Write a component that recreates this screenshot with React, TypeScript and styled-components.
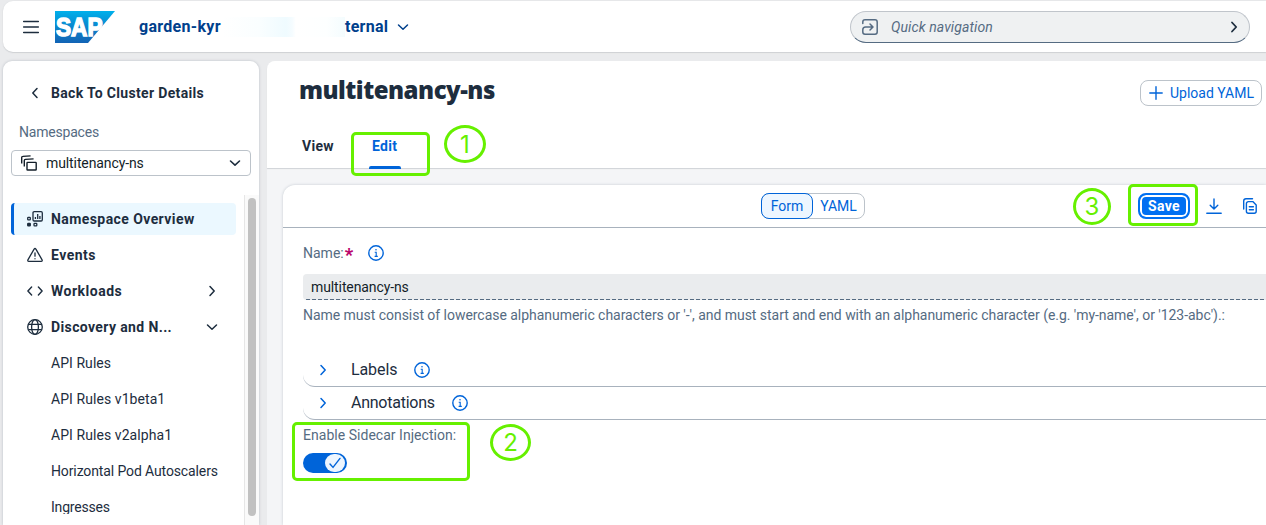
import React from "react";
import styled, { createGlobalStyle, css } from "styled-components";

const ink = "#1d2d3e";
const muted = "#556b82";
const blue = "#0064d9";
const green = "#66f000";

const GlobalStyle = createGlobalStyle`
  * { box-sizing: border-box; }
  html, body { margin: 0; padding: 0; }
  body {
    width: 1266px; height: 525px; overflow: hidden;
    background: #eaebed; color: ${ink};
    font: 14px/20px Roboto, "Liberation Sans", sans-serif;
  }
`;

const Page = styled.div`
  position: relative;
  display: flex;
  flex-direction: column;
  width: 1266px;
  height: 525px;
  padding: 1px 0 0 3px;
  gap: 9px;
  overflow: hidden;
`;

const ShellBar = styled.header`
  display: flex;
  align-items: center;
  flex: 0 0 51px;
  padding: 0 16px 0 18px;
  background: #fff;
  border-radius: 10px 0 0 10px;
  box-shadow: 0 1px 1px #cfd1d4, 0 0 2px #dcdee1;
`;

const Logo = styled.svg`
  margin-left: 14px;
  display: block;
`;

const ClusterName = styled.div`
  display: flex;
  align-items: center;
  margin-left: 24px;
  color: #00408c;
  font-weight: 700;
  font-size: 16px;
  white-space: pre;
  svg { margin-left: 6px; }
`;

const ClusterPart = styled.span<{ $w: number; $ls: number }>`
  width: ${(p) => p.$w}px;
  letter-spacing: ${(p) => p.$ls}px;
`;

const Smudge = styled.span`
  width: 123px;
  height: 20px;
  background: linear-gradient(90deg, #fff 0, #fafeff 30%, #effbff 52%, #f5fcff 57%, #fff 60%, #fdffff 85%, #f4fcfe 100%);
`;

const Search = styled.div`
  display: flex;
  align-items: center;
  width: 400px;
  height: 32px;
  margin-left: auto;
  padding: 0 7px 0 11px;
  border: 1px solid #c0c5cb;
  border-bottom-color: ${muted};
  border-radius: 16px;
  background: #eff1f2;
  color: ${muted};
  font-style: italic;
  svg:last-child { margin-left: auto; }
`;

const SearchHint = styled.span`
  margin-left: 13px;
  letter-spacing: 0.1px;
`;

const Body = styled.div`
  display: flex;
  flex: 1;
  gap: 8px;
  min-height: 0;
`;

const Sidebar = styled.aside`
  display: flex;
  flex-direction: column;
  flex: 0 0 256px;
  background: #fff;
  border-radius: 9px 9px 0 0;
  box-shadow: 0 0 3px #b9bec5;
`;

const BackLink = styled.div`
  display: flex;
  align-items: center;
  gap: 8px;
  height: 20px;
  margin: 22px 0 0 24px;
  font-weight: 700;
  letter-spacing: 0.33px;
`;

const FieldLabel = styled.label`
  display: flex;
  align-items: center;
  height: 20px;
  color: ${muted};
`;

const SideLabel = styled(FieldLabel)`
  margin: 19px 0 0 16px;
  letter-spacing: -0.2px;
`;

const Select = styled.div`
  display: flex;
  align-items: center;
  justify-content: space-between;
  width: 240px;
  height: 26px;
  margin: 8px 0 0 8px;
  padding: 0 7px 0 9px;
  border: 1px solid #bcc3ca;
  border-radius: 4px;
`;

const SelectValue = styled.span`
  display: flex;
  align-items: center;
  gap: 9px;
  color: #131e29;
  letter-spacing: -0.1px;
`;

const NavArea = styled.div`
  display: flex;
  justify-content: space-between;
  flex: 1;
  min-height: 0;
  margin-top: 19px;
`;

const NavList = styled.nav`
  width: 225px;
  height: 319px;
  margin-left: 8px;
  padding-top: 6px;
  overflow: hidden;
`;

const ScrollTrack = styled.div`
  width: 15px;
  padding: 3px 3px 0;
  background: #fafafa;
  border-left: 1px solid #e6e6e6;
`;

const ScrollThumb = styled.div`
  width: 8px;
  height: 318px;
  border-radius: 4px;
  background: #c1c1c1;
`;

const NavItem = styled.div<{ $active?: boolean; $child?: boolean }>`
  display: flex;
  align-items: center;
  height: 32px;
  margin: 2px 0 4px;
  padding: 0 16px 0 ${(p) => (p.$child ? 40 : 16)}px;
  border-radius: 4px;
  font-weight: ${(p) => (p.$child ? 400 : 700)};
  ${(p) =>
    p.$active &&
    css`
      padding-left: 13px;
      border-left: 3px solid ${blue};
      background: #ebf8ff;
    `}
`;

const NavText = styled.span<{ $ls?: number }>`
  flex: 1;
  white-space: nowrap;
  letter-spacing: ${(p) => p.$ls ?? 0}px;
`;

const NavIcon = styled.span`
  display: flex;
  width: 24px;
`;

const Main = styled.main`
  display: flex;
  flex-direction: column;
  flex: 1;
  min-width: 0;
  background: #f4f5f7;
  border-top-left-radius: 8px;
`;

const PageHeader = styled.div`
  flex: 0 0 107px;
  background: #fff;
  border-top-left-radius: 8px;
  box-shadow: 0 1px 1px #d0d3d6;
`;

const TitleRow = styled.div`
  display: flex;
  justify-content: space-between;
  height: 45px;
  padding: 14px 4px 0 32px;
`;

const Title = styled.h1`
  margin: 0;
  font: 900 24px/30px "Noto Sans", sans-serif;
  letter-spacing: -0.5px;
`;

const OutlineButton = styled.button`
  display: flex;
  align-items: center;
  gap: 7px;
  width: 122px;
  height: 26px;
  margin: 5px 0 0;
  padding: 0 0 0 8px;
  border: 1px solid #bcc3ca;
  border-radius: 8px;
  background: #fff;
  color: ${blue};
  font: inherit;
  white-space: nowrap;
`;

const Tabs = styled.div`
  display: flex;
  gap: 39px;
  margin: 17px 0 0 35px;
  height: 45px;
`;

const Tab = styled.div<{ $active?: boolean }>`
  position: relative;
  width: 31px;
  padding-top: 13px;
  font-weight: 700;
  letter-spacing: 0.3px;
  color: ${(p) => (p.$active ? blue : ink)};
  ${(p) =>
    p.$active &&
    css`
      &::after {
        content: "";
        position: absolute;
        left: -3px;
        bottom: -1px;
        width: 32px;
        height: 3px;
        border-radius: 2px 2px 0 0;
        background: ${blue};
      }
    `}
`;

const Panel = styled.section`
  flex: 1;
  margin: 17px 0 0 16px;
  background: #fff;
  border-top-left-radius: 12px;
  box-shadow: 0 0 3px #c3c9d0;
`;

const Toolbar = styled.div`
  display: flex;
  align-items: center;
  height: 43px;
  padding: 0 8px 0 478px;
  border-bottom: 1px solid #a8b2bd;
`;

const Segments = styled.div`
  display: flex;
  width: 104px;
  height: 26px;
  border: 1px solid #bcc3ca;
  border-radius: 8px;
`;

const Segment = styled.div<{ $active?: boolean }>`
  display: flex;
  align-items: center;
  justify-content: center;
  width: 51px;
  color: ${blue};
  ${(p) =>
    p.$active &&
    css`
      width: 52px;
      margin: -1px 0 -1px -1px;
      border: 1px solid ${blue};
      border-radius: 8px;
      background: #edf6ff;
    `}
`;

const Actions = styled.div`
  display: flex;
  align-items: center;
  margin-left: auto;
`;

const SaveButton = styled.button`
  width: 52px;
  height: 26px;
  margin: 0 16px 0 0;
  padding: 0;
  border: 2px solid #0070f2;
  border-radius: 8px;
  background: #0070f2;
  box-shadow: inset 0 0 0 2px #fff;
  color: #fff;
  font: inherit;
  font-weight: 700;
  letter-spacing: 0.3px;
`;

const CopyIcon = styled.svg`
  margin-left: 20px;
`;

const Form = styled.div`
  padding: 15px 0 0 20px;
`;

const Required = styled.b`
  width: 8px;
  margin: 3px 15px 0 1px;
  color: #ba066c;
  font-size: 18px;
  font-weight: 900;
`;

const Input = styled.div`
  height: 26px;
  margin-top: 11px;
  padding: 3px 8px;
  border-radius: 4px 0 0 4px;
  background:
    repeating-linear-gradient(90deg, ${muted} 0 4px, transparent 4px 6px) 3px 100% / 100% 1px no-repeat,
    #eaecee;
  color: #131e29;
  letter-spacing: -0.1px;
`;

const Help = styled.div`
  margin: 5px 0 29px;
  color: ${muted};
  white-space: nowrap;
  letter-spacing: -0.035px;
`;

const Expander = styled.div`
  display: flex;
  align-items: center;
  height: 33px;
  padding: 0 0 0 12px;
  border-bottom: 1px solid #a8b2bd;
  border-bottom-left-radius: 12px;
  font-size: 16px;
`;

const ExpanderTitle = styled.span<{ $ls: number }>`
  margin: 0 17px 0 20px;
  letter-spacing: ${(p) => p.$ls}px;
`;

const SwitchLabel = styled(FieldLabel)`
  margin-top: 5px;
  letter-spacing: 0.03px;
`;

const Switch = styled.div`
  display: flex;
  justify-content: flex-end;
  width: 44px;
  height: 20px;
  margin-top: 8px;
  padding: 1px 2px 1px 1px;
  border-radius: 10px;
  background: ${blue};
`;

const Knob = styled.span`
  display: flex;
  align-items: center;
  justify-content: center;
  width: 20px;
  height: 18px;
  border-radius: 9px;
  background: #edf6ff;
`;

const Mark = styled.div<{ $x: number; $y: number; $w: number; $h: number; $round?: boolean }>`
  position: absolute;
  left: ${(p) => p.$x}px;
  top: ${(p) => p.$y}px;
  width: ${(p) => p.$w}px;
  height: ${(p) => p.$h}px;
  display: flex;
  align-items: center;
  justify-content: center;
  padding-top: 1px;
  border: 3px solid ${green};
  border-radius: ${(p) => (p.$round ? "50%" : "5px")};
  color: ${green};
  font: 400 24px/30px Inter, sans-serif;
`;

type ChevronProps = { dir: "left" | "right" | "down"; size?: number; color?: string; weight?: number };

const chevronPaths = {
  left: "M10 3.5 5.8 8l4.2 4.5",
  right: "M6 3.5 10.2 8 6 12.5",
  down: "M3.5 6 8 10.2 12.5 6",
};

const Chevron = ({ dir, size = 16, color = ink, weight = 1.5 }: ChevronProps) => (
  <svg width={size} height={size} viewBox="0 0 16 16" fill="none" stroke={color} strokeWidth={weight} strokeLinecap="round" strokeLinejoin="round">
    <path d={chevronPaths[dir]} />
  </svg>
);

const Info = () => (
  <svg width="16" height="16" viewBox="0 0 16 16" fill="none" stroke={blue} strokeWidth="1.4">
    <circle cx="8" cy="8" r="7.2" />
    <path d="M6.7 7.3H8.2V11.6M6.6 11.4H9.8" strokeWidth="1.1" />
    <circle cx="8" cy="4.8" r=".8" fill={blue} stroke="none" />
  </svg>
);

export default function App() {
  return (
    <>
      <GlobalStyle />
      <Page>
        <ShellBar>
          <svg width="20" height="16" viewBox="0 0 20 16" stroke={ink} strokeWidth="1.3" strokeLinecap="round">
            <path d="M2.6 2.5H17.4M2.6 8H17.4M2.6 13.5H17.4" />
          </svg>
          <Logo width="60" height="32" viewBox="0 0 60 32">
            <defs>
              <linearGradient id="sapBlue" x1="0" y1="0" x2="0" y2="1">
                <stop offset="0" stopColor="#00b0eb" />
                <stop offset=".5" stopColor="#0b86cd" />
                <stop offset="1" stopColor="#1263b5" />
              </linearGradient>
            </defs>
            <path d="M0 0H60L33 32H0Z" fill="url(#sapBlue)" />
            <text x="1" y="24.5" textLength="46.5" lengthAdjust="spacingAndGlyphs" fill="#fff" stroke="#fff" strokeWidth="1.5" fontFamily="Liberation Sans, sans-serif" fontWeight="700" fontSize="25">SAP</text>
          </Logo>
          <ClusterName>
            <ClusterPart $w={83} $ls={0.3}>garden-kyr</ClusterPart>
            <Smudge />
            <ClusterPart $w={44} $ls={0.25}>ternal</ClusterPart>
            <Chevron dir="down" color="#00408c" />
          </ClusterName>
          <Search>
            <svg width="16" height="16" viewBox="0 0 16 16" fill="none" stroke={muted} strokeWidth="1.5" strokeLinecap="round" strokeLinejoin="round">
              <path d="M.8 4.5V3A2.2 2.2 0 0 1 3 .8H13A2.2 2.2 0 0 1 15.2 3V13A2.2 2.2 0 0 1 13 15.2H3A2.2 2.2 0 0 1 .8 13V10.8C.8 9.2 1.8 8 3.6 8H10.8M8 5 11 8 8 11" />
            </svg>
            <SearchHint>Quick navigation</SearchHint>
            <Chevron dir="right" size={16} weight={1.8} />
          </Search>
        </ShellBar>

        <Body>
          <Sidebar>
            <BackLink>
              <Chevron dir="left" />
              Back To Cluster Details
            </BackLink>
            <SideLabel>Namespaces</SideLabel>
            <Select>
              <SelectValue>
                <svg width="16" height="16" viewBox="0 0 16 16" fill="none" stroke="#131e29" strokeWidth="1.4">
                  <path d="M.7 8.6V2.6Q.7 1.4 1.8 1.4L9.6.9M3.3 11.6V5.6Q3.3 4.5 4.4 4.4L12.6 3.9" />
                  <rect x="6" y="7.4" width="9.2" height="7.6" rx=".6" />
                </svg>
                multitenancy-ns
              </SelectValue>
              <Chevron dir="down" weight={1.6} />
            </Select>
            <NavArea>
              <NavList>
                <NavItem $active>
                  <NavIcon>
                    <svg width="16" height="16" viewBox="0 0 16 16" fill="none" stroke={ink} strokeWidth="1.3">
                      <rect x="6" y=".7" width="9.3" height="9.3" rx="1.2" />
                      <path d="M8.4 8V6M10.7 8V3M12.9 8V5" />
                      <rect x=".7" y="6.3" width="2.6" height="2.6" rx=".6" />
                      <rect x=".7" y="12.3" width="2.6" height="2.6" rx=".6" fill={ink} />
                      <rect x="7" y="12.3" width="2.8" height="2.6" rx=".6" />
                    </svg>
                  </NavIcon>
                  <NavText $ls={0.42}>Namespace Overview</NavText>
                </NavItem>
                <NavItem>
                  <NavIcon>
                    <svg width="16" height="16" viewBox="0 0 16 16" fill="none" stroke={ink} strokeWidth="1.3" strokeLinejoin="round" strokeLinecap="round">
                      <path d="M7.1 2.1.9 12.9Q.4 14.3 1.8 14.4H14.2Q15.6 14.3 15.1 12.9L8.9 2.1Q8 .9 7.1 2.1ZM8 5.8V9.2M8 11.7V11.8" />
                    </svg>
                  </NavIcon>
                  <NavText $ls={0.5}>Events</NavText>
                </NavItem>
                <NavItem>
                  <NavIcon>
                    <svg width="16" height="16" viewBox="0 0 16 16" fill="none" stroke={ink} strokeWidth="1.4" strokeLinejoin="round" strokeLinecap="round">
                      <path d="M4.6 4 .9 8l3.7 4M11.4 4l3.7 4-3.7 4" />
                    </svg>
                  </NavIcon>
                  <NavText $ls={0.5}>Workloads</NavText>
                  <Chevron dir="right" />
                </NavItem>
                <NavItem>
                  <NavIcon>
                    <svg width="16" height="16" viewBox="0 0 16 16" fill="none" stroke={ink} strokeWidth="1.3">
                      <circle cx="8" cy="8" r="7.3" />
                      <ellipse cx="8" cy="8" rx="3.4" ry="7.3" />
                      <path d="M1.4 5.4H14.6M1.4 10.6H14.6" />
                    </svg>
                  </NavIcon>
                  <NavText $ls={0.38}>Discovery and N...</NavText>
                  <Chevron dir="down" />
                </NavItem>
                <NavItem $child><NavText $ls={0.05}>API Rules</NavText></NavItem>
                <NavItem $child><NavText $ls={0.07}>API Rules v1beta1</NavText></NavItem>
                <NavItem $child><NavText $ls={0.07}>API Rules v2alpha1</NavText></NavItem>
                <NavItem $child><NavText $ls={-0.12}>Horizontal Pod Autoscalers</NavText></NavItem>
                <NavItem $child><NavText $ls={-0.2}>Ingresses</NavText></NavItem>
              </NavList>
              <ScrollTrack><ScrollThumb /></ScrollTrack>
            </NavArea>
          </Sidebar>

          <Main>
            <PageHeader>
              <TitleRow>
                <Title>multitenancy-ns</Title>
                <OutlineButton>
                  <svg width="14" height="14" viewBox="0 0 14 14" stroke={blue} strokeWidth="1.4" strokeLinecap="round">
                    <path d="M7 .8V13.2M.8 7H13.2" />
                  </svg>
                  Upload YAML
                </OutlineButton>
              </TitleRow>
              <Tabs>
                <Tab>View</Tab>
                <Tab $active>Edit</Tab>
              </Tabs>
            </PageHeader>
            <Panel>
              <Toolbar>
                <Segments>
                  <Segment $active>Form</Segment>
                  <Segment>YAML</Segment>
                </Segments>
                <Actions>
                  <SaveButton>Save</SaveButton>
                  <svg width="16" height="16" viewBox="0 0 16 16" fill="none" stroke={blue} strokeWidth="1.4" strokeLinecap="round" strokeLinejoin="round">
                    <path d="M8 1V10.8M4.2 7.2 8 11l3.8-3.8M.8 15.2H15.2" />
                  </svg>
                  <CopyIcon width="16" height="16" viewBox="0 0 16 16" fill="none" stroke={blue} strokeWidth="1.4" strokeLinecap="round">
                    <path d="M1.7 11V3A2.3 2.3 0 0 1 4 .8H10.5M7.3 8.8H11.4M7.3 11.8H11.4" />
                    <path d="M6.4 3.6H10.8L14.2 7V13.2A2 2 0 0 1 12.2 15.2H6.4A2 2 0 0 1 4.4 13.2V5.6A2 2 0 0 1 6.4 3.6Z" strokeLinejoin="round" />
                  </CopyIcon>
                </Actions>
              </Toolbar>
              <Form>
                <FieldLabel>Name:<Required>*</Required><Info /></FieldLabel>
                <Input>multitenancy-ns</Input>
                <Help>Name must consist of lowercase alphanumeric characters or '-', and must start and end with an alphanumeric character (e.g. 'my-name', or '123-abc').:</Help>
                <Expander>
                  <Chevron dir="right" color={blue} />
                  <ExpanderTitle $ls={-0.1}>Labels</ExpanderTitle>
                  <Info />
                </Expander>
                <Expander>
                  <Chevron dir="right" color={blue} />
                  <ExpanderTitle $ls={-0.25}>Annotations</ExpanderTitle>
                  <Info />
                </Expander>
                <SwitchLabel>Enable Sidecar Injection:</SwitchLabel>
                <Switch>
                  <Knob>
                    <svg width="12" height="12" viewBox="0 0 12 12" fill="none" stroke={blue} strokeWidth="1.4" strokeLinecap="round" strokeLinejoin="round">
                      <path d="M1 7l3 3.4L11 1.4" />
                    </svg>
                  </Knob>
                </Switch>
              </Form>
            </Panel>
          </Main>
        </Body>

        <Mark $x={351} $y={132} $w={79} $h={44} />
        <Mark $x={292} $y={422} $w={178} $h={59} />
        <Mark $x={1128} $y={184} $w={70} $h={42} />
        <Mark $round $x={444} $y={125} $w={42} $h={38}>1</Mark>
        <Mark $round $x={490} $y={424} $w={41} $h={37}>2</Mark>
        <Mark $round $x={1073} $y={188} $w={38} $h={37}>3</Mark>
      </Page>
    </>
  );
}
